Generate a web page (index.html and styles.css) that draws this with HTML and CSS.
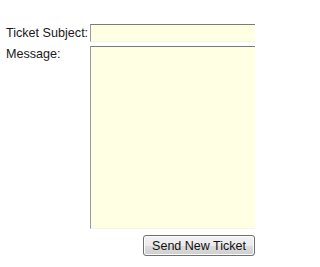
FILE: index.html
```html
<!DOCTYPE html>
<html>
<head>
<meta charset="utf-8">
<link rel="stylesheet" href="styles.css">
</head>
<body>
<form class="ticket">
  <label class="lbl lbl-mid" for="subj">Ticket Subject:</label>
  <div class="field"><input id="subj" class="inp" type="text"></div>
  <label class="lbl lbl-top" for="msg">Message:</label>
  <div class="field"><textarea id="msg" class="area"></textarea></div>
  <div class="actions"><button type="button" class="btn">Send New Ticket</button></div>
</form>
</body>
</html>
```

FILE: styles.css
```css
html, body {
  margin: 0;
  padding: 0;
  background: #ffffff;
}
body {
  font-family: "Liberation Sans", Arial, sans-serif;
  font-size: 12px;
  color: #1a1a1a;
}
.ticket {
  display: grid;
  grid-template-columns: 84px 165px;
  column-gap: 0;
  row-gap: 4px;
  margin: 24px 0 0 6px;
  width: 249px;
}
.lbl {
  font-size: 12.6px;
  line-height: 14px;
  white-space: nowrap;
  color: #1a1a1a;
}
.lbl-mid {
  align-self: center;
}
.lbl-top {
  padding-top: 1px;
}
.field {
  overflow: hidden;
}
.inp, .area {
  display: block;
  box-sizing: border-box;
  margin: 0;
  padding: 0;
  width: 172px;
  background: #ffffe3;
  border-style: solid;
  border-width: 1px 0 1px 1px;
  border-top-color: #7a7a7a;
  border-left-color: #9a9a9a;
  border-bottom-color: #f4f4e8;
  outline: none;
  resize: none;
  font: inherit;
}
.inp {
  height: 18px;
}
.area {
  height: 183px;
}
.actions {
  grid-column: 1 / 3;
  display: flex;
  justify-content: flex-end;
  margin-top: 2px;
}
.btn {
  box-sizing: border-box;
  width: 112px;
  height: 21px;
  margin: 0;
  padding: 0;
  font-family: "Liberation Sans", Arial, sans-serif;
  font-size: 12.5px;
  color: #111111;
  border: 1px solid #707070;
  border-radius: 3px;
  background: linear-gradient(#f2f2f2 0%, #ebebeb 50%, #dddddd 51%, #cfcfcf 100%);
  box-shadow: inset 0 0 0 1px #fcfcfc;
}
```
